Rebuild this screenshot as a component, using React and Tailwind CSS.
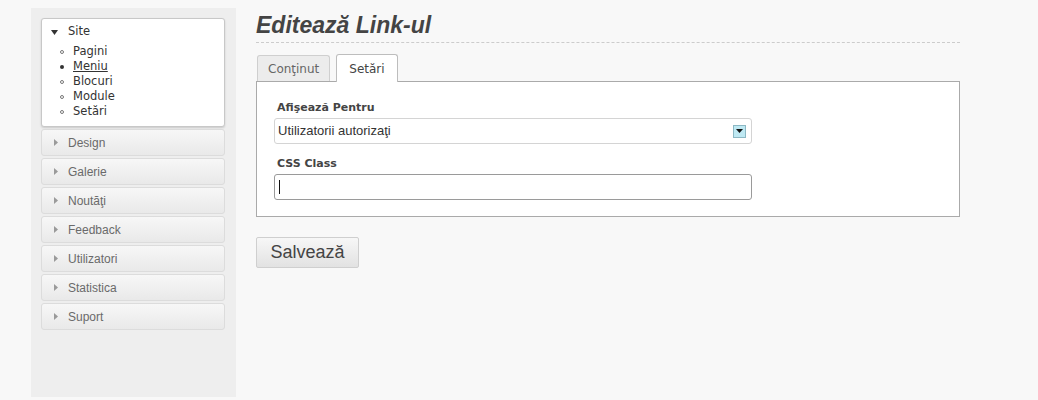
import React from 'react';

const verdana = { fontFamily: "'DejaVu Sans', Verdana, sans-serif" };
const arial = { fontFamily: "'Liberation Sans', Arial, sans-serif" };

// ─── Sidebar ──────────────────────────────────────────────────────────────────
function SiteBox() {
  const items = ['Pagini', 'Meniu', 'Blocuri', 'Module', 'Setări'];
  return (
    <div className="h-[109px] bg-white border border-[#c8c8c8] rounded-[3px] shadow-[0_1px_2px_rgba(0,0,0,0.15)] pl-[6px] pt-[6px] text-[11.5px] text-[#333]" style={verdana}>
      <div className="flex items-center h-[14px]">
        <svg width="7" height="5" viewBox="0 0 7 5" className="ml-[3px]"><path d="M0 0h7L3.5 5z" fill="#333" /></svg>
        <span className="ml-[10px]">Site</span>
      </div>
      <ul className="mt-[5px] ml-[12px] leading-[15px]">
        {items.map((it) => (
          <li key={it} className="flex items-center">
            {it === 'Meniu'
              ? <span className="w-[4px] h-[4px] rounded-full bg-[#333]" />
              : <span className="w-[4px] h-[4px] rounded-full border border-[#777]" />}
            <span className={`ml-[9px] ${it === 'Meniu' ? 'underline' : ''}`}>{it}</span>
          </li>
        ))}
      </ul>
    </div>
  );
}

function MenuItem({ label }) {
  return (
    <div
      className="mt-[2px] h-[27px] flex items-center rounded-[3px] border border-[#dcdcdc] bg-gradient-to-b from-[#f7f7f7] to-[#e9e9e9] text-[12px] text-[#6a6a6a]"
      style={arial}
    >
      <svg width="4" height="7" viewBox="0 0 4 7" className="ml-[12px]"><path d="M0 0l4 3.5L0 7z" fill="#9a9a9a" /></svg>
      <span className="ml-[10px]">{label}</span>
    </div>
  );
}

function Sidebar() {
  const menu = ['Design', 'Galerie', 'Noutăţi', 'Feedback', 'Utilizatori', 'Statistica', 'Suport'];
  return (
    <div className="w-[205px] h-[389px] shrink-0 bg-[#eeeeee] pt-[10px] pl-[10px] pr-[11px]">
      <SiteBox />
      {menu.map((m) => <MenuItem key={m} label={m} />)}
    </div>
  );
}

// ─── Main ─────────────────────────────────────────────────────────────────────
function Field({ label, children, className = '' }) {
  return (
    <div className={className}>
      <div className="text-[11px] font-bold text-[#444] leading-[14px] pl-[3px]" style={verdana}>{label}</div>
      {children}
    </div>
  );
}

function Main() {
  return (
    <div className="ml-[20px] w-[704px]">
      <div className="pt-[4px] pb-[4px] border-b border-dashed border-[#cccccc]">
        <h1 className="text-[23px] leading-[26px] font-bold italic text-[#444]" style={arial}>Editează Link-ul</h1>
      </div>

      {/* tabs */}
      <div className="flex items-end mt-[11px] pl-[1px] h-[27px] text-[12px]" style={verdana}>
        <div className="h-[26px] px-[10px] flex items-center bg-[#ececec] border border-[#cfcfcf] border-b-0 rounded-t-[3px] text-[#666]">Conţinut</div>
        <div className="ml-[6px] h-[28px] px-[12px] flex items-center bg-white border border-[#bdbdbd] border-b-0 rounded-t-[3px] text-[#444] relative top-[1px] z-10">Setări</div>
      </div>

      <div className="bg-white border border-[#aaaaaa] h-[136px] pl-[17px] pt-[19px]">
        <Field label="Afişează Pentru">
          <div className="mt-[3px] w-[478px] h-[26px] border border-[#d4d4d4] rounded-[3px] flex items-center justify-between pl-[3px] pr-[5px] text-[13px] text-[#333]" style={arial}>
            <span>Utilizatorii autorizaţi</span>
            <span className="w-[13px] h-[13px] bg-[#bfe9f3] border border-[#8cb8c4] flex items-center justify-center">
              <svg width="7" height="4" viewBox="0 0 7 4"><path d="M0 0h7L3.5 4z" fill="#111" /></svg>
            </span>
          </div>
        </Field>
        <Field label="CSS Class" className="mt-[13px]">
          <div className="mt-[3px] w-[478px] h-[26px] border border-[#9a9a9a] rounded-[3px] flex items-center pl-[4px]">
            <span className="w-px h-[14px] bg-[#111]" />
          </div>
        </Field>
      </div>

      <button
        className="mt-[20px] w-[103px] h-[31px] border border-[#cfcfcf] rounded-[2px] bg-gradient-to-b from-[#f7f7f7] to-[#e2e2e2] text-[18px] text-[#444] flex items-center justify-center"
        style={arial}
      >
        Salvează
      </button>
    </div>
  );
}

export default function App() {
  return (
    <div className="w-[1038px] h-[400px] bg-[#f8f8f8] flex pl-[31px] pt-[8px] overflow-hidden">
      <Sidebar />
      <Main />
    </div>
  );
}
